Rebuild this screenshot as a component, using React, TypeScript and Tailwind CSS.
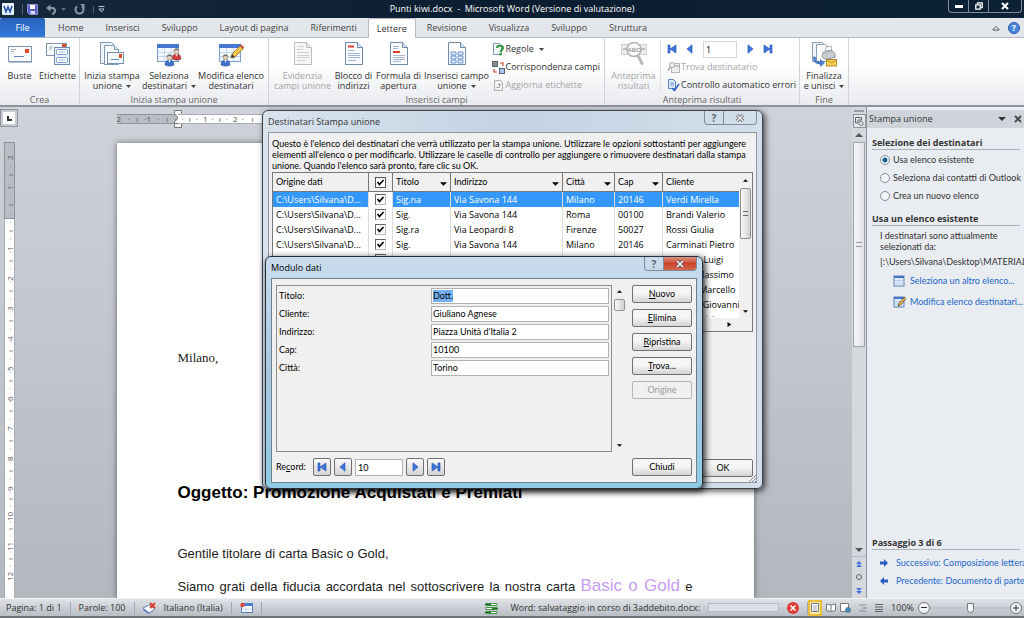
import type { ReactNode } from 'react';

const UI = "font-['Open_Sans','Noto_Sans',sans-serif]";
const DIALOG = "font-['Lato','Liberation_Sans',sans-serif]";

const tabsBefore = ['Home', 'Inserisci', 'Sviluppo', 'Layout di pagina', 'Riferimenti'];
const tabsAfter = ['Revisione', 'Visualizza', 'Sviluppo', 'Struttura'];

const rows = [
  { titolo: 'Sig.na', indirizzo: 'Via Savona 144', citta: 'Milano', cap: '20146', cliente: 'Verdi Mirella' },
  { titolo: 'Sig.', indirizzo: 'Via Savona 144', citta: 'Roma', cap: '00100', cliente: 'Brandi Valerio' },
  { titolo: 'Sig.ra', indirizzo: 'Via Leopardi 8', citta: 'Firenze', cap: '50027', cliente: 'Rossi Giulia' },
  { titolo: 'Sig.', indirizzo: 'Via Savona 144', citta: 'Milano', cap: '20146', cliente: 'Carminati Pietro' },
  { titolo: 'Sig.', indirizzo: 'Via Roma 3', citta: 'Milano', cap: '20146', cliente: 'Romano Luigi' },
  { titolo: 'Sig.', indirizzo: 'Via Dante 7', citta: 'Roma', cap: '00100', cliente: 'Ferrari Massimo' },
  { titolo: 'Sig.', indirizzo: 'Via Verdi 12', citta: 'Roma', cap: '00100', cliente: 'Moretti Marcello' },
  { titolo: 'Sig.', indirizzo: 'Via Mazzini 5', citta: 'Torino', cap: '10100', cliente: 'Fontana Giovanni' },
  { titolo: 'Dott.', indirizzo: 'Via Po 2', citta: 'Torino', cap: '10100', cliente: 'Galli Fabrizio' },
];

const fields = [
  { id: 'titolo', label: 'Titolo:', value: 'Dott.' },
  { id: 'cliente', label: 'Cliente:', value: 'Giuliano Agnese' },
  { id: 'indirizzo', label: 'Indirizzo:', value: "Piazza Unità d'Italia 2" },
  { id: 'cap', label: 'Cap:', value: '10100' },
  { id: 'citta', label: 'Città:', value: 'Torino' },
];

/* ---------- icons ---------- */

function Caret({ className = 'text-[#444]' }: { className?: string }) {
  return (
    <svg viewBox="0 0 5 3" className={`inline-block h-[3px] w-[5px] ${className}`}>
      <path d="M0 0h5L2.5 3z" fill="currentColor" />
    </svg>
  );
}

function Arrow({ dir, className }: { dir: 'up' | 'down' | 'right'; className: string }) {
  const d = { up: 'M0 4h8L4 0z', down: 'M0 0h8L4 4z', right: 'M2 0v4l3-2z' }[dir];
  return (
    <svg viewBox="0 0 8 4" className={className}>
      <path d={d} fill="currentColor" />
    </svg>
  );
}

function RecordIcon({ kind }: { kind: 'first' | 'prev' | 'next' | 'last' }) {
  const back = kind === 'first' || kind === 'prev';
  const bar = kind === 'first' || kind === 'last';
  return (
    <svg viewBox="0 0 10 10" className={`h-[10px] w-[10px] ${back ? '-scale-x-100' : ''}`}>
      <path d={bar ? 'M1 1l6 4-6 4z' : 'M3 0.8l5 4.2-5 4.2z'} fill="#3f78dc" stroke="#1f49ad" strokeWidth=".6" />
      {bar && <path d="M7 1h2v8H7z" fill="#3f78dc" stroke="#1f49ad" strokeWidth=".6" />}
    </svg>
  );
}

function EnvelopeIcon() {
  return (
    <svg viewBox="0 0 26 26" className="h-[26px] w-[26px]">
      <rect x="1.5" y="5.5" width="23" height="15" fill="#fbfcfd" stroke="#7f95ad" />
      <path d="M2 21h23v1H2z" fill="#b5c0cc" />
      <rect x="18" y="8" width="4" height="4" fill="#e0472b" />
      <path d="M4 8.5h5M4 10.5h3" stroke="#9aa9ba" />
      <path d="M7 15.5h10" stroke="#5c7fb5" />
    </svg>
  );
}

function LabelsIcon() {
  return (
    <svg viewBox="0 0 26 26" className="h-[26px] w-[26px]">
      <rect x="1.5" y="2.5" width="20" height="12" fill="#fbfcfd" stroke="#7f95ad" />
      <rect x="17" y="3" width="4" height="3" fill="#e0472b" />
      <path d="M4 6h4M4 8h3" stroke="#9aa9ba" />
      <rect x="9.5" y="6.5" width="15" height="17" fill="#e8f0fa" stroke="#6e8db5" />
      <rect x="11.5" y="8.5" width="11" height="5" rx="1" fill="#fff" stroke="#7d9fd0" />
      <rect x="11.5" y="16.5" width="11" height="5" rx="1" fill="#fff" stroke="#7d9fd0" />
      <path d="M14 11h6M14 19h6" stroke="#a3bce0" />
    </svg>
  );
}

function StartMergeIcon() {
  return (
    <svg viewBox="0 0 26 26" className="h-[26px] w-[26px]">
      <path d="M1.5 1.5h11l4 4v17h-15z" fill="#eef4fb" stroke="#8299b5" />
      <path d="M5.5 4.5h10l4 4v15h-14z" fill="#fff" stroke="#8299b5" />
      <path d="M15.5 4.5v4h4" fill="#dbe6f3" stroke="#8299b5" />
      <rect x="8.5" y="11.5" width="16" height="11" fill="#f7fafd" stroke="#7690b0" />
      <rect x="20" y="13" width="3" height="4" fill="#e0472b" />
      <path d="M12 18.5h8" stroke="#6c8bbd" />
    </svg>
  );
}

function Person({ x, y, color }: { x: number; y: number; color: string }) {
  return (
    <g transform={`translate(${x} ${y})`}>
      <path d="M0 11c0-4 2-5 4.5-5S9 7 9 11c-2 1.5-7 1.5-9 0z" fill={color} stroke="#2b3f6b" strokeWidth=".4" />
      <path d="M3.5 6L4.5 9 5.5 6z" fill="#fff" />
      <circle cx="4.5" cy="3.2" r="2.7" fill="#e3cdb4" stroke="#777" strokeWidth=".4" />
      <path d="M1.8 3C2-.5 7-.5 7.2 3 6 1.8 3 1.8 1.8 3z" fill="#6c6f73" />
    </g>
  );
}

function RecipientsIcon({ edit = false }: { edit?: boolean }) {
  return (
    <svg viewBox="0 0 26 26" className="h-[26px] w-[26px]">
      <rect x="1.5" y="3.5" width="21" height="17" fill="#f3f8fe" stroke="#7d9fd0" />
      <path d="M1 3h22v4H1z" fill="#4579cf" />
      <path d="M2 11.5h20M2 15.5h20M8.5 7v13M15.5 7v13" stroke="#c5d7ef" />
      {edit ? (
        <>
          <Person x={3} y={13} color="#3d72cc" />
          <path d="M13 17l1-4 8-8 3 3-8 8z" fill="#f4c44a" stroke="#8a6420" strokeWidth=".7" />
          <path d="M13 17l1-4 3 3z" fill="#3c3c3c" />
          <path d="M22 5l1.5-1.5 3 3L25 8z" fill="#d8574c" />
        </>
      ) : (
        <>
          <Person x={16} y={7} color="#d23c3c" />
          <Person x={9} y={13} color="#3d72cc" />
        </>
      )}
    </svg>
  );
}

function DocIcon({ kind }: { kind: 'highlight' | 'address' | 'greeting' | 'field' }) {
  const off = kind === 'highlight';
  const line = off ? '#cfcfcf' : '#a3b7d2';
  return (
    <svg viewBox="0 0 26 26" className="h-[26px] w-[26px]">
      <path d="M4.5 1.5h12l5 5v17h-17z" fill={off ? '#f6f6f6' : '#fcfdff'} stroke={off ? '#bdbdbd' : '#7189a8'} />
      <path d="M16.5 1.5v5h5" fill={off ? '#e8e8e8' : '#d6e3f2'} stroke={off ? '#bdbdbd' : '#7189a8'} />
      {kind === 'address' && <path d="M7 5.5h6" stroke="#d83a2c" strokeWidth="2" />}
      {kind === 'greeting' && <path d="M7 11h7" stroke="#d83a2c" strokeWidth="2" />}
      {kind === 'field' ? (
        <g fill="#e6effb" stroke="#5f8ac9" strokeWidth=".9">
          <path d="M7 11h5v3H7zM14 11h5v3h-5zM7 15h5v3H7zM14 15h5v3h-5zM7 19h5v3H7zM14 19h5v3h-5z" />
        </g>
      ) : (
        <path
          d={
            kind === 'address'
              ? 'M7 9.5h6M7 12.5h12M7 14.5h12M7 16.5h12M7 19.5h8'
              : kind === 'greeting'
                ? 'M7 5.5h6M7 7.5h5M7 14.5h12M7 16.5h12M7 18.5h12M7 20.5h8'
                : 'M7 5.5h7M7 8.5h6M7 11.5h12M7 14.5h12M7 16.5h12M7 19.5h8'
          }
          stroke={line}
        />
      )}
    </svg>
  );
}

function PreviewIcon() {
  return (
    <svg viewBox="0 0 26 26" className="h-[26px] w-[26px]">
      <rect x="0.5" y="3.5" width="25" height="10" fill="#ececec" stroke="#d0d0d0" />
      <path d="M2 8h5M19 8h5" stroke="#bdbdbd" strokeWidth="2" />
      <circle cx="13" cy="8.5" r="7" fill="#f7f7f7" stroke="#b3b3b3" strokeWidth="1.5" />
      <text x="13" y="11" textAnchor="middle" fontSize="6" fontWeight="bold" fill="#999" fontFamily="Liberation Sans">
        ABC
      </text>
      <path d="M17 14.5l4 8" stroke="#b8b8b8" strokeWidth="3" strokeLinecap="round" />
    </svg>
  );
}

function FinishIcon() {
  return (
    <svg viewBox="0 0 26 26" className="h-[26px] w-[26px]">
      <path d="M1.5 1.5h10l4 4v15h-14z" fill="#f2f6fb" stroke="#8b9db4" />
      <path d="M5.5 3.5h9l5 5v12h-14z" fill="#fff" stroke="#8b9db4" />
      <path d="M12 11.5l9-2 3 3v4l-10 2-3-3z" fill="#c9cdd2" stroke="#7c828a" strokeWidth=".8" />
      <path d="M14 10l1-4 5-1 1 4z" fill="#fff" stroke="#8a8f96" strokeWidth=".7" />
      <path d="M4.5 16c0 4 1 5 5 5v-2.5l4 3.5-4 3.5V23c-5 0-7-2-7-7z" fill="#4f7fd6" stroke="#24509e" strokeWidth=".5" />
      <rect x="15.5" y="18.5" width="10" height="6.5" fill="#f8cf4e" stroke="#a8791b" strokeWidth=".8" />
      <path d="M15.5 18.5l5 3.5 5-3.5" fill="none" stroke="#a8791b" strokeWidth=".8" />
    </svg>
  );
}

function RulesIcon() {
  return (
    <svg viewBox="0 0 13 13" className="h-[13px] w-[13px]">
      <path d="M1.5.5h6l2 2v9h-8z" fill="#f6f9fd" stroke="#8299b5" />
      <path d="M5 5c0-3 6-3 6 0 0 2-2.5 2-2.5 4" fill="none" stroke="#2f9a41" strokeWidth="2" />
      <circle cx="8.5" cy="11.3" r="1.3" fill="#2f9a41" />
    </svg>
  );
}

function MatchIcon() {
  return (
    <svg viewBox="0 0 13 13" className="h-[13px] w-[13px]">
      <rect x=".5" y=".5" width="5" height="5" fill="#858d96" stroke="#59616a" />
      <rect x="7.5" y="7.5" width="5" height="5" fill="#a9c4ee" stroke="#59616a" />
      <path d="M8 2h3v3M5 11H2V8" fill="none" stroke="#d8432f" strokeWidth="1.2" />
    </svg>
  );
}

function SmallDocIcon() {
  return (
    <svg viewBox="0 0 13 13" className="h-[13px] w-[13px]">
      <path d="M2.5 1.5h6l2 2v8h-8z" fill="#f1f1f1" stroke="#b0b0b0" />
      <path d="M4.5 8.5h3V5M6 6l1.5-1.5L9 6" fill="none" stroke="#a3a3a3" />
    </svg>
  );
}

function FindRecipientIcon() {
  return (
    <svg viewBox="0 0 13 13" className="h-[13px] w-[13px]">
      <rect x="4.5" y="2.5" width="8" height="9" fill="#eee" stroke="#b5b5b5" />
      <path d="M5 5h7" stroke="#b5b5b5" strokeWidth="1.5" />
      <circle cx="5" cy="4" r="2.5" fill="#fafafa" stroke="#a5a5a5" />
      <path d="M3.5 6L.8 9.5" stroke="#a5a5a5" strokeWidth="1.5" />
    </svg>
  );
}

function CheckErrorsIcon() {
  return (
    <svg viewBox="0 0 13 13" className="h-[13px] w-[13px]">
      <path d="M1.5.5h5l2 2v7h-7z" fill="#dfeafa" stroke="#5c82bd" />
      <path d="M3 4h4M3 6h4" stroke="#6f95d3" />
      <path d="M5 9l2.5 2.5L12 5" fill="none" stroke="#2f62c2" strokeWidth="1.5" />
    </svg>
  );
}

function TableIcon({ edit = false }: { edit?: boolean }) {
  return (
    <svg viewBox="0 0 13 12" className="h-[12px] w-[13px] shrink-0">
      <rect x="1" y="1" width="10" height="10" fill="#dfeafb" stroke="#5f80b5" />
      <path d="M1 1h10v2H1z" fill="#4574c4" />
      <path d="M2 5.5h8M2 8h8" stroke="#a6bfe3" strokeWidth=".7" />
      {edit && <path d="M5 10l1-3 5.5-6L13 2.5 7.5 9z" fill="#e9b64b" stroke="#4d3a1c" strokeWidth=".7" />}
    </svg>
  );
}

/* ---------- ribbon ---------- */

function TitleBar() {
  return (
    <header className="flex h-[18px] shrink-0 items-center bg-linear-to-r from-[#16293c] via-[#0b1d30] to-[#0c2136] px-[2px]">
      <div className="flex flex-1 items-center gap-2">
        <svg viewBox="0 0 12 12" className="h-3 w-3">
          <rect width="12" height="12" rx="1" fill="#e9f1fb" />
          <path d="M2 3l2 6 2-5 2 5 2-6" fill="none" stroke="#2458ac" strokeWidth="1.6" />
        </svg>
        <button aria-label="Salva" className="border-l border-[#51606e] pl-1">
          <svg viewBox="0 0 11 11" className="h-[11px] w-[11px]">
            <path d="M.5.5h10v10h-8l-2-2z" fill="#5d63c8" stroke="#8d91de" />
            <path d="M3 1h5v4H3z" fill="#fff" />
            <path d="M3.5 7h4.5v3H3.5z" fill="#d9dcf2" />
          </svg>
        </button>
        <button aria-label="Annulla" className="flex items-center gap-1">
          <svg viewBox="0 0 11 11" className="h-[11px] w-[11px]">
            <path d="M3 4h3c4 0 4 5 0 6" fill="none" stroke="#8b98a5" strokeWidth="2" />
            <path d="M0 4l4.5-3.5v7z" fill="#8b98a5" />
          </svg>
          <Caret className="text-[#5b6b7a]" />
        </button>
        <button aria-label="Ripeti">
          <svg viewBox="0 0 11 11" className="h-[11px] w-[11px]">
            <path d="M3 2.5a4 4 0 1 0 5 0" fill="none" stroke="#8b98a5" strokeWidth="2" />
            <path d="M6 0h4.5v4.5z" fill="#8b98a5" />
          </svg>
        </button>
        <button aria-label="Personalizza" className="flex items-center border-l border-[#51606e] pl-1">
          <svg viewBox="0 0 7 7" className="h-[7px] w-[7px]">
            <path d="M.5.5h6M1 3h5L3.5 6z" fill="none" stroke="#b9c4ce" />
          </svg>
        </button>
      </div>
      <h1 className="text-[9px] whitespace-pre text-white">Punti kiwi.docx  -  Microsoft Word (Versione di valutazione)</h1>
      <div className="flex flex-1 justify-end self-start">
        <div className="flex h-[13px] rounded-b border border-t-0 border-[#7d8b99] text-white">
          <button aria-label="Riduci" className="grid w-5 place-items-center border-r border-[#7d8b99]">
            <span className="h-[3px] w-2 bg-white" />
          </button>
          <button aria-label="Ripristina" className="grid w-5 place-items-center border-r border-[#7d8b99]">
            <svg viewBox="0 0 8 8" className="h-2 w-2">
              <path d="M2.5 2V.8h4.700v4.700H6M.8 2.8h4.400v4.400H.8z" fill="none" stroke="#fff" strokeWidth="1.3" />
            </svg>
          </button>
          <button aria-label="Chiudi" className="grid w-8 place-items-center">
            <svg viewBox="0 0 8 8" className="h-2 w-2">
              <path d="M1 1l6 6M7 1L1 7" stroke="#fff" strokeWidth="2" />
            </svg>
          </button>
        </div>
      </div>
    </header>
  );
}

function Tabs() {
  const tab = 'h-full px-[11px] text-[#444]';
  return (
    <nav className="flex h-5 shrink-0 items-stretch border-b border-[#b4bac2] bg-[#e3e6ea] text-[9px]">
      <button className="mr-[2px] w-[45px] rounded-t-xs bg-linear-to-b from-[#2a62bd] to-[#2f78dc] text-white">File</button>
      {tabsBefore.map((t) => (
        <button key={t} className={tab}>
          {t}
        </button>
      ))}
      <button className="-mb-px rounded-t-xs border border-b-0 border-[#b4bac2] bg-white px-2 text-[#333]">Lettere</button>
      {tabsAfter.map((t, i) => (
        <button key={i} className={tab}>
          {t}
        </button>
      ))}
      <div className="ml-auto flex items-center gap-2 pr-1">
        <button aria-label="Riduci barra multifunzione">
          <svg viewBox="0 0 8 6" className="h-[6px] w-2">
            <path d="M1 4.5l3-3 3 3v.5H1z" fill="#fff" stroke="#444" />
          </svg>
        </button>
        <button
          aria-label="Guida"
          className="grid h-3 w-3 place-items-center rounded-full border border-[#2a5db0] bg-[#4b86dd] text-[9px] leading-none font-bold text-white"
        >
          ?
        </button>
      </div>
    </nav>
  );
}

function Group({ title, className = '', children }: { title: string; className?: string; children: ReactNode }) {
  return (
    <section className={`flex shrink-0 flex-col border-r border-[#cfd4da] ${className}`}>
      <div className="flex h-14 items-start justify-center pt-[2px]">{children}</div>
      <h2 className="text-center leading-[11px] text-[#666]">{title}</h2>
    </section>
  );
}

interface BigButtonProps {
  icon: ReactNode;
  lines: string[];
  menu?: boolean;
  off?: boolean;
  className: string;
}

function BigButton({ icon, lines, menu, off, className }: BigButtonProps) {
  return (
    <button
      disabled={off}
      className={`flex shrink-0 flex-col items-center pt-px leading-[10px] whitespace-nowrap ${off ? 'text-[#a5a5a5]' : 'text-[#333]'} ${className}`}
    >
      {icon}
      <span className="mt-1">{lines[0]}</span>
      {lines[1] && (
        <span className="flex items-center gap-1">
          {lines[1]}
          {menu && <Caret />}
        </span>
      )}
    </button>
  );
}

function RecordNav() {
  return (
    <div className="flex h-[18px] items-center gap-2">
      <button aria-label="Primo record">
        <RecordIcon kind="first" />
      </button>
      <button aria-label="Record precedente">
        <RecordIcon kind="prev" />
      </button>
      <input
        aria-label="Record"
        defaultValue="1"
        className="h-[17px] w-[34px] border border-[#d3d7dc] bg-white px-[2px] text-[9px] text-black"
      />
      <button aria-label="Record successivo">
        <RecordIcon kind="next" />
      </button>
      <button aria-label="Ultimo record">
        <RecordIcon kind="last" />
      </button>
    </div>
  );
}

function Ribbon() {
  const small = 'flex h-[18px] items-center gap-px whitespace-nowrap';
  return (
    <div className="flex h-[69px] shrink-0 border-b-2 border-[#8e949c] bg-linear-to-b from-white from-40% to-[#e8eaee] text-[9px]">
      <Group title="Crea" className="w-20">
        <BigButton className="w-9" icon={<EnvelopeIcon />} lines={['Buste']} />
        <BigButton className="w-10" icon={<LabelsIcon />} lines={['Etichette']} />
      </Group>
      <Group title="Inizia stampa unione" className="w-[189px]">
        <BigButton className="w-[62px]" icon={<StartMergeIcon />} lines={['Inizia stampa', 'unione']} menu />
        <BigButton className="w-[52px]" icon={<RecipientsIcon />} lines={['Seleziona', 'destinatari']} menu />
        <BigButton className="w-[72px]" icon={<RecipientsIcon edit />} lines={['Modifica elenco', 'destinatari']} />
      </Group>
      <Group title="Inserisci campi" className="w-[336px]">
        <BigButton className="w-[60px]" icon={<DocIcon kind="highlight" />} lines={['Evidenzia', 'campi unione']} off />
        <BigButton className="w-[42px]" icon={<DocIcon kind="address" />} lines={['Blocco di', 'indirizzi']} />
        <BigButton className="w-12" icon={<DocIcon kind="greeting" />} lines={['Formula di', 'apertura']} />
        <BigButton className="w-[68px]" icon={<DocIcon kind="field" />} lines={['Inserisci campo', 'unione']} menu />
        <div className="flex w-[110px] flex-col pl-px text-[#333]">
          <button className={small}>
            <RulesIcon />
            Regole <Caret className="ml-1 text-[#444]" />
          </button>
          <button className={small}>
            <MatchIcon />
            Corrispondenza campi
          </button>
          <button disabled className={`${small} text-[#a5a5a5]`}>
            <SmallDocIcon />
            Aggiorna etichette
          </button>
        </div>
      </Group>
      <Group title="Anteprima risultati" className="w-[195px]">
        <BigButton className="w-[54px] border-r border-[#dde1e6]" icon={<PreviewIcon />} lines={['Anteprima', 'risultati']} off />
        <div className="flex w-[136px] flex-col pl-[6px] text-[#333]">
          <RecordNav />
          <button disabled className={`${small} text-[#a5a5a5]`}>
            <FindRecipientIcon />
            Trova destinatario
          </button>
          <button className={small}>
            <CheckErrorsIcon />
            Controllo automatico errori
          </button>
        </div>
      </Group>
      <Group title="Fine" className="w-[49px]">
        <BigButton className="w-12" icon={<FinishIcon />} lines={['Finalizza', 'e unisci']} menu />
      </Group>
    </div>
  );
}

/* ---------- document ---------- */

function HorizontalRuler() {
  const step = 'flex w-[30px] shrink-0 items-center justify-between';
  return (
    <div className="mx-auto flex h-6 w-[637px] items-center text-[8px] leading-[8px] text-[#555]">
      <div className="flex h-[10px] w-[61px] shrink-0 items-center border-y border-[#8d939b] bg-[#b9bec5]">
        {['2', '1'].map((n) => (
          <span key={n} className={step}>
            <span>{n}</span>
            <span>·</span>
            <span>ı</span>
            <span>·</span>
          </span>
        ))}
      </div>
      <svg viewBox="0 0 8 18" className="-mx-1 h-[18px] w-2 shrink-0">
        <path d="M.5.5h7v3L4 8 .5 3.500zM.5 17.500h7V12L4 8 .5 12zM.5 13.500h7" fill="#f4f5f7" stroke="#777" />
      </svg>
      <div className="flex h-[10px] flex-1 items-center border-y border-[#a9aeb5] bg-white">
        {['1', '2'].map((n) => (
          <span key={n} className={`${step} pl-1`}>
            <span>·</span>
            <span>ı</span>
            <span>·</span>
            <span>{n}</span>
          </span>
        ))}
        <span className="ml-1 flex w-3 justify-between">
          <span>·</span>
          <span>ı</span>
        </span>
      </div>
    </div>
  );
}

function VerticalRuler() {
  const cell = 'flex h-[30px] shrink-0 items-center justify-between rotate-180 [writing-mode:vertical-rl]';
  return (
    <div className="flex w-[18px] shrink-0 flex-col items-center overflow-hidden text-[8px] leading-[9px] text-[#555]">
      <button aria-label="Tabulazione" className="mt-[2px] grid h-[18px] w-[18px] shrink-0 place-items-center border border-[#8d939b] bg-[#c9cdd2]">
        <span className="grid h-3 w-3 place-items-center bg-white">
          <span className="h-[5px] w-[5px] border-b-2 border-l-2 border-[#333]" />
        </span>
      </button>
      <div className="mt-[15px] flex w-[11px] flex-col items-center border border-[#8d939b] bg-[#b9bec5] pt-3 pb-[3px]">
        {['2', '1'].map((n) => (
          <span key={n} className={`${cell} w-[9px]`}>
            <span>·</span>
            <span>ı</span>
            <span>·</span>
            <span>{n}</span>
          </span>
        ))}
      </div>
      <div className="flex min-h-0 w-[11px] flex-1 flex-col items-center border-x border-[#a9aeb5] bg-white pt-[2px]">
        {Array.from({ length: 12 }, (_, i) => (
          <span key={i} className={`${cell} w-[9px]`}>
            <span>{i + 1}</span>
            <span>·</span>
            <span>ı</span>
            <span>·</span>
          </span>
        ))}
      </div>
    </div>
  );
}

function DocumentArea() {
  return (
    <main className="flex min-w-0 flex-1 flex-col overflow-hidden">
      <HorizontalRuler />
      <article className="mx-auto mt-3 w-[637px] flex-1 bg-white px-[61px] font-['Liberation_Sans',Arial,sans-serif] text-[13px] leading-4 text-[#1c1c1c] shadow-[0_0_6px_rgba(0,0,0,0.5)]">
        <p className="mt-[207px] font-['Liberation_Serif',serif]">Milano,</p>
        <h2 className="mt-[117px] text-[17px] leading-5 font-bold text-black">Oggetto: Promozione Acquistati e Premiati</h2>
        <p className="mt-[43px]">Gentile titolare di carta Basic o Gold,</p>
        <p className="mt-[14px] leading-5 [text-align-last:justify]">
          Siamo grati della fiducia accordata nel sottoscrivere la nostra carta{' '}
          <span className="text-[17px] text-[#c79df2]">Basic o Gold</span> e
        </p>
      </article>
    </main>
  );
}

function DocumentScrollbar() {
  return (
    <div className="flex w-[14px] shrink-0 flex-col items-center bg-[#d5d9de] text-[#555]">
      <div className="mt-[3px] h-[2px] w-[10px] bg-[#9a9fa6]" />
      <button aria-label="Righello" className="mt-[2px] grid h-[14px] w-[13px] place-items-center border border-[#8d939b] bg-[#e3e6ea]">
        <svg viewBox="0 0 9 9" className="h-[9px] w-[9px]">
          <path d="M.5 3V.5h6V3H3v3H.5zM4 6.500c0-3 4-3 4 0s-2 2-4 1z" fill="none" stroke="#666" />
        </svg>
      </button>
      <button aria-label="Scorri su" className="grid h-[14px] w-full place-items-center">
        <Arrow dir="up" className="h-1 w-2" />
      </button>
      <div className="grid h-[205px] w-[12px] place-items-center border border-[#a0a5ac] bg-linear-to-r from-[#f4f5f7] to-[#dfe2e6]">
        <span className="h-[5px] w-[6px] border-y border-[#999]" />
      </div>
      <div className="flex-1" />
      <button aria-label="Scorri giù" className="grid h-[13px] w-full place-items-center border-b border-[#b4bac2]">
        <Arrow dir="down" className="h-1 w-2" />
      </button>
      <button aria-label="Pagina precedente" className="grid h-[13px] place-items-center">
        <svg viewBox="0 0 6 6" className="h-[6px] w-[6px]">
          <path d="M3 0l3 3H0zM3 3l3 3H0z" fill="#4373d9" />
        </svg>
      </button>
      <button aria-label="Seleziona oggetto" className="grid h-[13px] place-items-center">
        <span className="h-[6px] w-[6px] rounded-full border border-[#666]" />
      </button>
      <button aria-label="Pagina successiva" className="grid h-[15px] place-items-center">
        <svg viewBox="0 0 6 6" className="h-[6px] w-[6px]">
          <path d="M0 0h6L3 3zM0 3h6L3 6z" fill="#4373d9" />
        </svg>
      </button>
    </div>
  );
}

function TaskPane() {
  const heading = `mr-1 border-b border-[#a9b1bb] pb-px text-[9px] leading-[11px] font-bold text-[#333] ${UI}`;
  const options = ['Usa elenco esistente', 'Seleziona dai contatti di Outlook', 'Crea un nuovo elenco'];
  return (
    <aside className="flex w-[158px] shrink-0 flex-col overflow-hidden border-l border-[#8e949c] bg-[#e9ecf1] text-[9px] whitespace-nowrap text-[#333]">
      <div className="mt-[3px] flex h-[18px] shrink-0 items-center bg-[#d0d4da] px-[2px]">
        <h2 className="flex-1">Stampa unione</h2>
        <button aria-label="Opzioni riquadro" className="mr-2">
          <Arrow dir="down" className="h-1 w-2" />
        </button>
        <button aria-label="Chiudi riquadro">
          <svg viewBox="0 0 8 8" className="h-2 w-2">
            <path d="M1 1l6 6M7 1L1 7" stroke="#444" strokeWidth="1.8" />
          </svg>
        </button>
      </div>
      <div className={`pt-[9px] pl-[5px] ${DIALOG}`}>
        <h3 className={heading}>Selezione dei destinatari</h3>
        <div className="mt-px flex flex-col pl-2">
          {options.map((o, i) => (
            <label key={o} className="flex h-[18px] items-center gap-[3px]">
              <input
                type="radio"
                name="origine"
                defaultChecked={i === 0}
                className="h-[10px] w-[10px] shrink-0 appearance-none rounded-full border border-[#8b9199] bg-[#f3f4f5] checked:bg-[radial-gradient(circle,#1c5f8a_35%,#e8f1f7_50%)]"
              />
              {o}
            </label>
          ))}
        </div>
        <h3 className={`mt-2 ${heading}`}>Usa un elenco esistente</h3>
        <p className="mt-1 pl-2 leading-[11px]">
          I destinatari sono attualmente
          <br />
          selezionati da:
        </p>
        <p className="mt-1 pl-2 leading-[11px]">[:\Users\Silvana\Desktop\MATERIALE</p>
        <div className="mt-[3px] flex flex-col pl-[21px] text-[#2166c8]">
          <a href="#elenco" className="flex h-[21px] items-center gap-1">
            <TableIcon />
            Seleziona un altro elenco...
          </a>
          <a href="#modifica" className="flex h-[21px] items-center gap-1">
            <TableIcon edit />
            Modifica elenco destinatari...
          </a>
        </div>
      </div>
      <div className={`mt-auto pb-2 pl-[5px] ${DIALOG}`}>
        <h3 className={heading}>Passaggio 3 di 6</h3>
        <div className="mt-1 flex flex-col pl-2 text-[#2166c8]">
          <a href="#successivo" className="flex h-[18px] items-center gap-2">
            <svg viewBox="0 0 8 8" className="h-2 w-2 shrink-0">
              <path d="M0 2.5h4V0l4 4-4 4V5.5H0z" fill="#2f5fc4" />
            </svg>
            Successivo: Composizione lettera
          </a>
          <a href="#precedente" className="flex h-[18px] items-center gap-2">
            <svg viewBox="0 0 8 8" className="h-2 w-2 shrink-0 -scale-x-100">
              <path d="M0 2.5h4V0l4 4-4 4V5.5H0z" fill="#2f5fc4" />
            </svg>
            Precedente: Documento di partenza
          </a>
        </div>
      </div>
    </aside>
  );
}

function StatusBar() {
  const sep = 'h-3 w-px bg-[#a3a8af]';
  return (
    <footer className="flex h-5 shrink-0 flex-col bg-[#6e7378]">
      <div className="flex h-[18px] items-center gap-2 border-t border-[#f2f3f5] bg-linear-to-b from-[#dfe2e6] to-[#b9bec5] px-[6px] text-[9px] whitespace-nowrap text-[#333]">
        <span>Pagina: 1 di 1</span>
        <span className={sep} />
        <span>Parole: 100</span>
        <span className={sep} />
        <svg viewBox="0 0 13 12" className="h-3 w-[13px]">
          <path d="M0 6l6-3 6 4-6 4z" fill="#fff" stroke="#5b7fc0" />
          <path d="M0 7l6 4v1L0 8z" fill="#3b67b5" />
          <path d="M7 1l5 5M12 1L7 6" stroke="#dd3a2a" strokeWidth="1.8" />
        </svg>
        <span>Italiano (Italia)</span>
        <span className={sep} />
        <svg viewBox="0 0 13 11" className="h-[11px] w-[13px]">
          <rect x="1.5" y="1.5" width="11" height="9" fill="#fff" stroke="#5b7fc0" />
          <path d="M1 1h12v3H1z" fill="#4c7ccf" />
          <path d="M2 7h10M6 4v6" stroke="#c5d7ef" />
          <circle cx="2.5" cy="3" r="2.2" fill="#d9463b" />
        </svg>
        <span className={sep} />
        <svg viewBox="0 0 13 12" className="ml-auto h-3 w-[13px]">
          <path d="M1 1.5h11v2H1zM1 5.5h11v2H1zM1 9.5h11v2H1z" fill="#fff" stroke="#3e9b4a" />
          <path d="M0 2.5h6M7 6.5h6M0 10.5h6" stroke="#2c6f36" strokeWidth="1.5" />
        </svg>
        <span className="ml-1">Word: salvataggio in corso di 3addebito.docx:</span>
        <span className="h-[9px] w-[71px] border border-[#b5bac1] bg-[#dde0e5]" />
        <button aria-label="Annulla salvataggio" className="grid h-3 w-3 place-items-center rounded-full bg-[#dd3b34]">
          <svg viewBox="0 0 6 6" className="h-[6px] w-[6px]">
            <path d="M.5.5l5 5M5.5.5l-5 5" stroke="#fff" strokeWidth="1.5" />
          </svg>
        </button>
        <span className={sep} />
        <div className="-ml-2 flex items-center gap-1">
          <button aria-label="Layout di stampa" className="grid h-4 w-[14px] place-items-center border-2 border-[#e9bd3c] bg-[#fbeaa8]">
            <svg viewBox="0 0 8 9" className="h-[9px] w-2">
              <path d="M.5.5h7v8h-7z" fill="#fff" stroke="#777" />
              <path d="M2 3h4M2 5h4M2 7h4" stroke="#888" strokeWidth=".8" />
            </svg>
          </button>
          <button aria-label="Lettura a schermo intero">
            <svg viewBox="0 0 10 9" className="h-[9px] w-[10px]">
              <path d="M.5 1l4.5 1 4.5-1v6.500L5 8.500.5 7.500zM5 2v6" fill="#fff" stroke="#777" />
            </svg>
          </button>
          <button aria-label="Layout Web">
            <svg viewBox="0 0 11 10" className="h-[10px] w-[11px]">
              <path d="M.5.5h8v8h-8z" fill="#fff" stroke="#777" />
              <circle cx="8" cy="7" r="2.5" fill="#4a87c9" stroke="#2f6a55" strokeWidth=".6" />
            </svg>
          </button>
          <button aria-label="Struttura" className="px-1">
            <svg viewBox="0 0 8 8" className="h-2 w-2">
              <path d="M0 1h7M3 4h5M0 7h7" stroke="#888" />
            </svg>
          </button>
          <button aria-label="Bozza">
            <svg viewBox="0 0 8 8" className="h-2 w-2">
              <path d="M0 .5h8M0 3h8M0 5.5h8M0 7.5h8" stroke="#666" />
            </svg>
          </button>
        </div>
        <span>100%</span>
        <div className="-mr-1 -ml-1 flex items-center">
          <button aria-label="Zoom indietro" className="grid h-3 w-3 place-items-center rounded-full border border-[#777] bg-[#f2f3f5]">
            <span className="h-px w-[6px] bg-[#333]" />
          </button>
          <input
            type="range"
            aria-label="Zoom"
            defaultValue={50}
            className="h-3 w-20 appearance-none bg-linear-to-b from-transparent from-45% via-[#888] to-transparent to-55% [&::-webkit-slider-thumb]:h-[10px] [&::-webkit-slider-thumb]:w-[7px] [&::-webkit-slider-thumb]:appearance-none [&::-webkit-slider-thumb]:rounded-b-full [&::-webkit-slider-thumb]:border [&::-webkit-slider-thumb]:border-[#777] [&::-webkit-slider-thumb]:bg-[#f2f3f5]"
          />
          <button aria-label="Zoom avanti" className="grid h-3 w-3 place-items-center rounded-full border border-[#777] bg-[#f2f3f5]">
            <svg viewBox="0 0 6 6" className="h-[6px] w-[6px]">
              <path d="M0 3h6M3 0v6" stroke="#333" />
            </svg>
          </button>
        </div>
      </div>
    </footer>
  );
}

/* ---------- dialogs ---------- */

function CloseGlyph({ light = false }: { light?: boolean }) {
  return (
    <svg viewBox="0 0 10 8" className="h-2 w-[10px]">
      <path d="M2 1l6 6M8 1L2 7" stroke="#555" strokeWidth="3" />
      <path d="M2 1l6 6M8 1L2 7" stroke={light ? '#fff' : '#f3f6f9'} strokeWidth="1.5" />
    </svg>
  );
}

function DialogTitle({ title, active = false }: { title: string; active?: boolean }) {
  return (
    <div className={`flex h-[21px] shrink-0 items-center text-[9px] ${UI}`}>
      <h2 className={`flex-1 ${active ? 'text-black' : 'text-[#333]'}`}>{title}</h2>
      <div className="flex h-[14px] self-start overflow-hidden rounded-b border border-t-0 border-[#7d8b99]">
        <button aria-label="Guida" className="w-[19px] border-r border-[#7d8b99] text-[10px] leading-3 font-bold text-[#5b6570]">
          ?
        </button>
        <button
          aria-label="Chiudi"
          className={`grid w-8 place-items-center ${active ? 'bg-linear-to-b from-[#dd9482] via-[#c8432b] to-[#d4674a]' : ''}`}
        >
          <CloseGlyph light={active} />
        </button>
      </div>
    </div>
  );
}

function Check({ label, header = false }: { label: string; header?: boolean }) {
  return (
    <span className="relative mx-auto grid h-[11px] w-[11px]">
      <input
        type="checkbox"
        defaultChecked
        aria-label={label}
        className={`h-[11px] w-[11px] appearance-none border bg-white ${header ? 'border-[#555]' : 'border-[#bbb] border-t-[#666] border-l-[#666]'}`}
      />
      <svg viewBox="0 0 11 11" className="pointer-events-none absolute inset-0">
        <path d="M2.5 5l2 2.5 4-4.5" fill="none" stroke="#000" strokeWidth="1.7" />
      </svg>
    </span>
  );
}

function RecipientsTable() {
  const columns = ['Titolo', 'Indirizzo', 'Città', 'Cap'];
  const th = 'h-[19px] border-r border-b border-[#777] bg-[#f0f0f0] px-[3px] text-left font-normal';
  const td = 'h-[15px] overflow-hidden border-r border-[#ddd] px-[3px] py-0 leading-[15px]';
  return (
    <div className="flex h-[160px] border border-[#777] bg-white">
      <div className="flex min-w-0 flex-1 flex-col">
        <div className="min-h-0 flex-1 overflow-hidden">
          <table className="w-full table-fixed border-separate border-spacing-0 whitespace-nowrap">
            <colgroup>
              <col className="w-24" />
              <col className="w-6" />
              <col className="w-[58px]" />
              <col className="w-28" />
              <col className="w-[52px]" />
              <col className="w-12" />
              <col />
            </colgroup>
            <thead className="text-[9px] text-black">
              <tr>
                <th className={th}>Origine dati</th>
                <th className={th}>
                  <span className="flex">
                    <Check label="Seleziona tutti" header />
                  </span>
                </th>
                {columns.map((c) => (
                  <th key={c} className={th}>
                    <button className="flex w-full items-center justify-between">
                      {c}
                      <Arrow dir="down" className="mt-1 h-1 w-[7px] text-black" />
                    </button>
                  </th>
                ))}
                <th className={`${th} border-r-0`}>Cliente</th>
              </tr>
            </thead>
            <tbody className={`text-[9px] text-black ${UI}`}>
              {rows.map((r, i) => (
                <tr key={i} className={i === 0 ? 'bg-[#3397fb] text-white' : ''}>
                  <td className={td}>C:\Users\Silvana\D...</td>
                  <td className={`${td} bg-white`}>
                    <span className="flex">
                      <Check label={`Includi ${r.cliente}`} />
                    </span>
                  </td>
                  <td className={td}>{r.titolo}</td>
                  <td className={td}>{r.indirizzo}</td>
                  <td className={td}>{r.citta}</td>
                  <td className={td}>{r.cap}</td>
                  <td className={`${td} border-r-0`}>{r.cliente}</td>
                </tr>
              ))}
            </tbody>
          </table>
        </div>
        <div className="flex h-[13px] items-center justify-end bg-[#f0f0f0] pr-1">
          <Arrow dir="right" className="h-[5px] w-[10px] text-black" />
        </div>
      </div>
      <div className="flex w-[13px] flex-col items-center bg-[#f0f0f0] text-black">
        <span className="grid h-[15px] place-items-center">
          <Arrow dir="up" className="h-[3px] w-[5px]" />
        </span>
        <span className="grid h-[51px] w-[11px] place-items-center rounded-xs border border-[#8f8f8f] bg-linear-to-r from-[#f8f8f8] to-[#d2d2d2]">
          <span className="h-[5px] w-[5px] border-y border-[#666]" />
        </span>
        <span className="mt-auto mb-3 grid h-[15px] place-items-center">
          <Arrow dir="down" className="h-[3px] w-[5px]" />
        </span>
      </div>
    </div>
  );
}

const dialogButton =
  'h-[18px] w-[60px] rounded-xs border border-[#707070] bg-linear-to-b from-[#f6f6f6] from-45% to-[#d4d4d4] text-[9px] text-black disabled:border-[#b5b5b5] disabled:bg-none disabled:text-[#9a9a9a]';

function RecipientsDialog() {
  return (
    <div
      role="dialog"
      aria-label="Destinatari Stampa unione"
      className={`absolute top-[110px] left-[262px] flex h-[379px] w-[501px] flex-col rounded-md border border-[#3b444d] bg-linear-to-r from-[#d9e3ee] via-[#c3d3e3] to-[#d3dfeb] px-[5px] pb-[5px] shadow-[2px_2px_6px_rgba(0,0,0,0.7)] ${DIALOG}`}
    >
      <DialogTitle title="Destinatari Stampa unione" />
      <div className="relative flex flex-1 flex-col border border-[#8d98a4] bg-[#f0f0f0] px-[3px] text-[9px] text-black">
        <p className="mt-[5px] mb-px leading-[11px]">
          Questo è l'elenco dei destinatari che verrà utilizzato per la stampa unione. Utilizzare le opzioni sottostanti per aggiungere
          <br />
          elementi all'elenco o per modificarlo. Utilizzare le caselle di controllo per aggiungere o rimuovere destinatari dalla stampa
          <br />
          unione. Quando l'elenco sarà pronto, fare clic su OK.
        </p>
        <RecipientsTable />
        <div className="mt-auto mb-[5px] flex justify-end">
          <button className={dialogButton}>OK</button>
        </div>
        <svg viewBox="0 0 7 7" className="absolute right-0 bottom-0 h-[7px] w-[7px]">
          <path d="M0 7l7-7M3 7l4-4M6 7l1-1" stroke="#8a8a8a" />
        </svg>
      </div>
    </div>
  );
}

function AccessKey({ text, at = 0 }: { text: string; at?: number }) {
  return (
    <>
      {text.slice(0, at)}
      <u>{text[at]}</u>
      {text.slice(at + 1)}
    </>
  );
}

function DataFormDialog() {
  const nav = 'grid h-[18px] w-[18px] place-items-center rounded-xs border border-[#707070] bg-linear-to-b from-[#fafafa] to-[#d4d4d4]';
  return (
    <div
      role="dialog"
      aria-label="Modulo dati"
      className={`absolute top-[256px] left-[265px] flex h-[233px] w-[438px] flex-col rounded-md border border-[#26303a] bg-linear-to-b from-[#c9dced] via-[#a9c9e2] to-[#8fcbe4] px-[5px] pb-[5px] shadow-[2px_2px_7px_rgba(0,0,0,0.9)] ${DIALOG}`}
    >
      <DialogTitle title="Modulo dati" active />
      <div className="flex flex-1 flex-col gap-[6px] border border-[#6f7f8e] bg-[#f0f0f0] px-[4px] pt-[6px] pb-[6px] text-[9px] text-black">
        <div className="flex flex-1">
          <div className="flex flex-1 border border-[#8c8c8c] p-[2px]">
            <div className="flex flex-1 flex-col gap-[2px]">
              {fields.map((f, i) => (
                <div key={f.id} className="flex items-center">
                  <label htmlFor={f.id} className="w-[152px]">
                    {f.label}
                  </label>
                  <div className="flex h-4 flex-1 items-center border border-[#b4b4b4] bg-white px-px">
                    <input
                      id={f.id}
                      defaultValue={f.value}
                      className={`leading-3 ${i === 0 ? 'field-sizing-content bg-[#74b2f4]' : 'w-full'}`}
                    />
                  </div>
                </div>
              ))}
            </div>
          </div>
          <div className="flex w-[14px] flex-col items-center">
            <Arrow dir="up" className="mt-[5px] h-[3px] w-[5px]" />
            <span className="mt-[6px] h-3 w-[11px] rounded-xs border border-[#8f8f8f] bg-linear-to-r from-[#f8f8f8] to-[#d2d2d2]" />
            <Arrow dir="down" className="mt-auto mb-[5px] h-[3px] w-[5px]" />
          </div>
          <div className="ml-[6px] flex flex-col gap-[6px]">
            {['Nuovo', 'Elimina', 'Ripristina', 'Trova...'].map((b) => (
              <button key={b} className={dialogButton}>
                <AccessKey text={b} />
              </button>
            ))}
            <button disabled className={dialogButton}>
              Origine
            </button>
          </div>
        </div>
        <div className="flex items-center gap-[3px]">
          <label htmlFor="record" className="w-[34px]">
            <AccessKey text="Record:" at={2} />
          </label>
          <button aria-label="Primo" className={nav}>
            <RecordIcon kind="first" />
          </button>
          <button aria-label="Precedente" className={nav}>
            <RecordIcon kind="prev" />
          </button>
          <input id="record" defaultValue="10" className="h-[17px] w-[48px] border border-[#b4b4b4] bg-white px-[2px]" />
          <button aria-label="Successivo" className={nav}>
            <RecordIcon kind="next" />
          </button>
          <button aria-label="Ultimo" className={nav}>
            <RecordIcon kind="last" />
          </button>
          <button className={`ml-auto ${dialogButton}`}>Chiudi</button>
        </div>
      </div>
    </div>
  );
}

export default function App() {
  return (
    <div className={`relative flex h-screen flex-col overflow-hidden ${UI}`}>
      <TitleBar />
      <Tabs />
      <Ribbon />
      <div className="flex min-h-0 flex-1 bg-linear-to-b from-[#cfd3d9] to-[#b3b8bf]">
        <VerticalRuler />
        <DocumentArea />
        <DocumentScrollbar />
        <TaskPane />
      </div>
      <StatusBar />
      <RecipientsDialog />
      <DataFormDialog />
    </div>
  );
}
